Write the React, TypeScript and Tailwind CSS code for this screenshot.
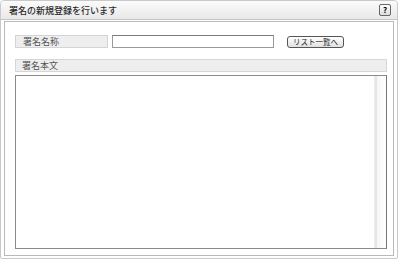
export default function App() {
  return (
    <div
      className="w-[400px] h-[260px] bg-white"
      style={{ fontFamily: '"Noto Sans CJK JP", "Noto Sans", sans-serif' }}
    >
      {/* dialog frame */}
      <div className="w-[398px] h-[259px] flex flex-col border border-[#c9c9c9] rounded-t-[4px] rounded-b-[2px] bg-white">
        {/* title bar */}
        <div className="h-[19px] flex items-center justify-between pl-[8px] pr-[6px] bg-gradient-to-b from-[#fbfbfb] to-[#e8e8e8] border-b border-[#c4c4c4] rounded-t-[4px]">
          <span className="text-[9px] font-medium leading-none text-[#2a2a2a]">署名の新規登録を行います</span>
          <div className="w-[12px] h-[12px] flex items-center justify-center rounded-[2px] border border-[#666] bg-gradient-to-b from-white to-[#dcdcdc] text-[8px] font-bold leading-none text-black">
            ?
          </div>
        </div>

        {/* body */}
        <div className="flex-1 flex px-[3px] pt-[1px] pb-[2px]">
          <div className="flex-1 flex flex-col border border-[#b9b9b9] pt-[13px] pl-[10px] pr-[6px] pb-[6px]">
            {/* name row */}
            <div className="flex items-center h-[13px]">
              <div className="w-[93px] h-[13px] flex items-center pl-[7px] bg-[#eeeeee] border border-[#d4d4d4] text-[9px] leading-none text-[#555]">
                署名名称
              </div>
              <input
                className="ml-[4px] w-[162px] h-[13px] border border-[#9a9a9a] border-t-[#7a7a7a] bg-white outline-none"
                type="text"
              />
              <button className="ml-[13px] w-[57px] h-[12px] mt-[1px] flex items-center justify-center rounded-[3px] border border-[#555] bg-gradient-to-b from-white to-[#e0e0e0] text-[7.5px] leading-none text-[#222]">
                リスト一覧へ
              </button>
            </div>

            {/* body label */}
            <div className="mt-[11px] h-[13px] flex items-center pl-[6px] bg-[#eeeeee] border border-[#d6d6d6] text-[9px] leading-none text-[#555]">
              署名本文
            </div>

            {/* textarea */}
            <div className="mt-[3px] flex-1 flex border border-[#8a8a8a] border-r-[#777] bg-white">
              <div className="flex-1" />
              <div className="w-[12px] flex">
                <div className="w-[1px] bg-[#ececec]" />
                <div className="w-[2px] bg-[#e6e6e6]" />
                <div className="flex-1 bg-gradient-to-r from-[#f6f6f6] to-white" />
              </div>
            </div>
          </div>
        </div>
      </div>
    </div>
  );
}
